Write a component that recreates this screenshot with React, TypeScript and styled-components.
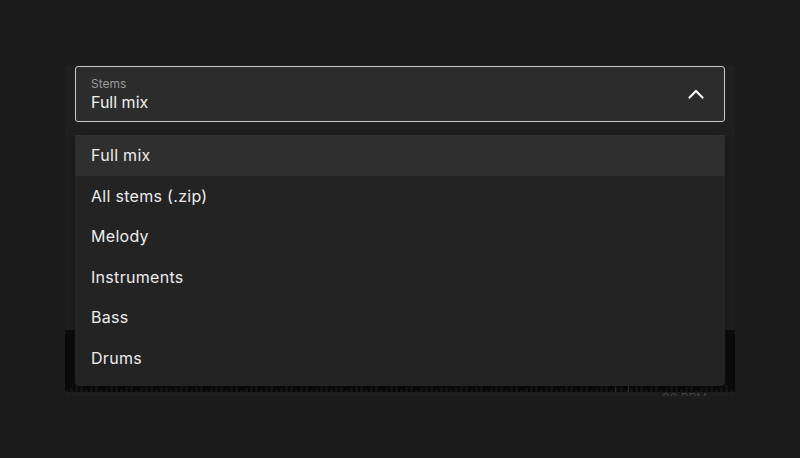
import * as React from 'react';
import styled, { createGlobalStyle } from 'styled-components';

const GlobalStyle = createGlobalStyle`
    html, body {
        margin: 0;
        padding: 0;
        background: #1b1b1b;
        font-family: Inter, "Noto Sans", "Liberation Sans", sans-serif;
    }
`;

const StyledPage = styled.div`
    width: 800px;
    height: 458px;
    display: flex;
    justify-content: center;
    padding-top: 65px;
    box-sizing: border-box;
    overflow: hidden;
`;

const StyledPanel = styled.section`
    position: relative;
    width: 670px;
    height: 331px;
    background: #1f1f1f;
    display: flex;
    flex-direction: column;
    padding: 1px 10px 0;
    box-sizing: border-box;
    overflow: hidden;
`;

const StyledTrigger = styled.button`
    height: 56px;
    width: 100%;
    box-sizing: border-box;
    background: #2c2c2c;
    border: 1px solid #c9c9c9;
    border-radius: 3px;
    display: flex;
    align-items: center;
    justify-content: space-between;
    padding: 0 20px 0 15px;
    font-family: inherit;
    cursor: pointer;
`;

const StyledTriggerText = styled.div`
    display: flex;
    flex-direction: column;
    align-items: flex-start;
    padding-top: 2px;
`;

const StyledLabel = styled.span`
    font-size: 12px;
    line-height: 15px;
    color: #9a9a9a;
`;

const StyledValue = styled.span`
    font-size: 16px;
    line-height: 23px;
    color: #f2f2f2;
`;

const StyledWave = styled.div`
    margin: auto -10px 4px;
    height: 62px;
    background: #0b0b0b;
    position: relative;
    display: flex;
    align-items: flex-end;
`;

const StyledMarker = styled.div`
    position: absolute;
    left: 550px;
    bottom: 0;
    width: 12px;
    height: 14px;
    border-left: 1px solid #333;
    border-right: 1px solid #333;
`;

const StyledBpm = styled.span`
    position: absolute;
    right: 28px;
    top: 60px;
    font-size: 12px;
    color: #444;
`;

const StyledMenu = styled.ul`
    position: absolute;
    top: 70px;
    left: 10px;
    right: 10px;
    margin: 0;
    padding: 0 0 8px;
    list-style: none;
    background: #232323;
    border-radius: 0 0 4px 4px;
    box-shadow: 0 3px 8px rgba(0, 0, 0, 0.35);
`;

const StyledItem: any = styled.li<{ $active?: boolean }>`
    height: 40.5px;
    display: flex;
    align-items: center;
    padding-left: 16px;
    font-size: 16px;
    letter-spacing: 0.3px;
    color: #ededed;
    background: ${(p) => (p.$active ? '#2f2f2f' : 'transparent')};
`;

const options = ['Full mix', 'All stems (.zip)', 'Melody', 'Instruments', 'Bass', 'Drums'];

const bars = Array.from({ length: 134 }, (_, i) => 2 + ((i * 37) % 7));

const App: React.FunctionComponent = () => {
    const selected = 'Full mix';

    return (
        <StyledPage>
            <GlobalStyle />
            <StyledPanel>
                <StyledTrigger>
                    <StyledTriggerText>
                        <StyledLabel>Stems</StyledLabel>
                        <StyledValue>{selected}</StyledValue>
                    </StyledTriggerText>
                    <svg width="16" height="10" viewBox="0 0 16 10" fill="none">
                        <path d="M1.5 8.5 L8 2 L14.5 8.5" stroke="#ffffff" strokeWidth="2" strokeLinecap="square" />
                    </svg>
                </StyledTrigger>
                <StyledWave>
                    <svg width="670" height="10" viewBox="0 0 670 10">
                        {bars.map((h, i) => (
                            <rect key={i} x={i * 5} y={10 - h} width="3" height={h} fill="#161616" />
                        ))}
                    </svg>
                    <StyledMarker />
                    <StyledBpm>90 BPM</StyledBpm>
                </StyledWave>
                <StyledMenu>
                    {options.map((o) => (
                        <StyledItem key={o} $active={o === selected}>{o}</StyledItem>
                    ))}
                </StyledMenu>
            </StyledPanel>
        </StyledPage>
    );
};

export default App;
